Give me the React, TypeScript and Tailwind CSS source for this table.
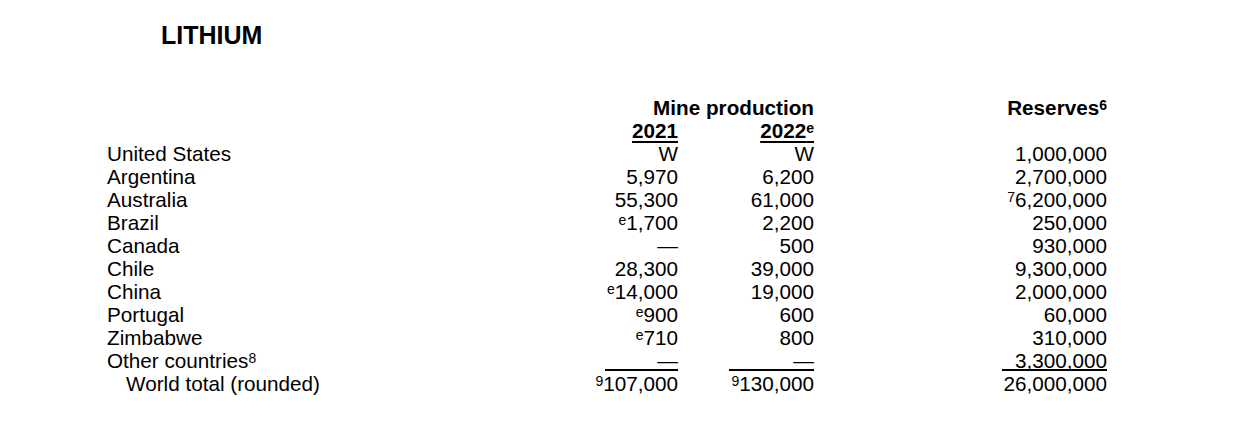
import { FC, ReactNode } from "react";

interface Row {
  name: ReactNode;
  y21: ReactNode;
  y22: ReactNode;
  res: ReactNode;
}

const Sup: FC<{ children: ReactNode; bold?: boolean }> = ({ children, bold }) => (
  <span className={`align-[5px] leading-none text-[14px] ${bold ? "font-bold" : ""}`}>{children}</span>
);

const rows: Row[] = [
  { name: "United States", y21: "W", y22: "W", res: "1,000,000" },
  { name: "Argentina", y21: "5,970", y22: "6,200", res: "2,700,000" },
  { name: "Australia", y21: "55,300", y22: "61,000", res: <><Sup>7</Sup>6,200,000</> },
  { name: "Brazil", y21: <><Sup>e</Sup>1,700</>, y22: "2,200", res: "250,000" },
  { name: "Canada", y21: "—", y22: "500", res: "930,000" },
  { name: "Chile", y21: "28,300", y22: "39,000", res: "9,300,000" },
  { name: "China", y21: <><Sup>e</Sup>14,000</>, y22: "19,000", res: "2,000,000" },
  { name: "Portugal", y21: <><Sup>e</Sup>900</>, y22: "600", res: "60,000" },
  { name: "Zimbabwe", y21: <><Sup>e</Sup>710</>, y22: "800", res: "310,000" },
];

// cell whose bottom edge carries the rule above the totals
const Ruled: FC<{ w: string; children: ReactNode }> = ({ w, children }) => (
  <div className="h-[23px] flex justify-end">
    <div className={`${w} h-[22px] border-b-2 border-black text-right whitespace-nowrap`}>{children}</div>
  </div>
);

const App: FC = () => {
  return (
    <div className="w-[1260px] h-[426px] bg-white text-black font-['Liberation_Sans',Arial,sans-serif] pt-[21px]">
      <h1 className="pl-[161px] text-[25px] leading-[28px] font-bold">LITHIUM</h1>
      <div className="mt-[47px] pl-[107px] grid grid-cols-[470px_101px_136px_293px] text-[20.7px] leading-[23px]">
        <div className="h-[23px]" />
        <div className="col-span-2 h-[23px] text-right font-bold whitespace-nowrap">Mine production</div>
        <div className="h-[23px] text-right font-bold whitespace-nowrap">Reserves<Sup bold>6</Sup></div>

        <div className="h-[23px]" />
        <div className="h-[23px] text-right font-bold"><span className="underline decoration-2 underline-offset-[3px]">2021</span></div>
        <div className="h-[23px] text-right font-bold whitespace-nowrap"><span className="underline decoration-2 underline-offset-[3px]">2022<Sup bold>e</Sup></span></div>
        <div className="h-[23px]" />

        {rows.map((r, i) => (
          <div key={i} className="contents">
            <div className="h-[23px] whitespace-nowrap">{r.name}</div>
            <div className="h-[23px] text-right whitespace-nowrap">{r.y21}</div>
            <div className="h-[23px] text-right whitespace-nowrap">{r.y22}</div>
            <div className="h-[23px] text-right whitespace-nowrap">{r.res}</div>
          </div>
        ))}

        <div className="h-[23px] whitespace-nowrap">Other countries<Sup>8</Sup></div>
        <Ruled w="w-[73px]">—</Ruled>
        <Ruled w="w-[85px]">—</Ruled>
        <Ruled w="w-[105px]">3,300,000</Ruled>

        <div className="h-[23px] pl-[19px] whitespace-nowrap">World total (rounded)</div>
        <div className="h-[23px] text-right whitespace-nowrap"><Sup>9</Sup>107,000</div>
        <div className="h-[23px] text-right whitespace-nowrap"><Sup>9</Sup>130,000</div>
        <div className="h-[23px] text-right whitespace-nowrap">26,000,000</div>
      </div>
    </div>
  );
};

export default App;
